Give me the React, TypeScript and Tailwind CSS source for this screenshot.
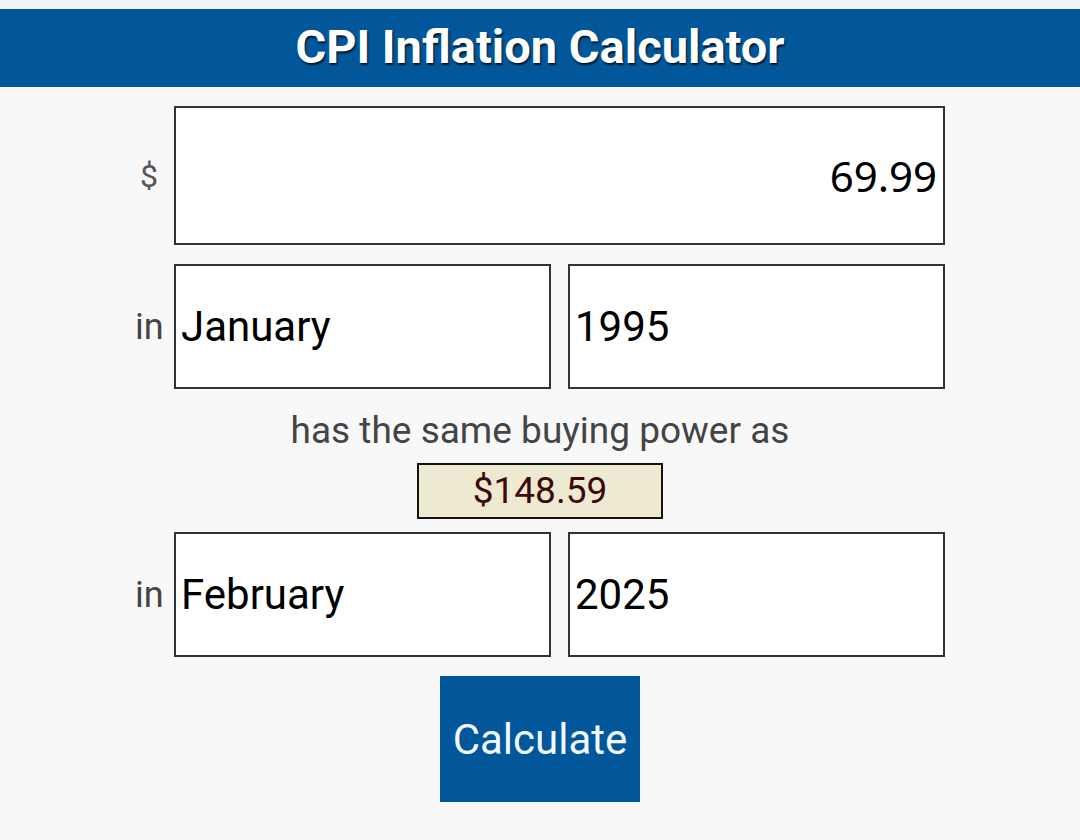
import React, { useState } from 'react';

const Box = ({ value, right, className = '' }: { value: string; right?: boolean; className?: string }) => (
  <div
    className={`flex items-center bg-white border-2 border-[#333] text-black font-['Roboto',sans-serif] text-[42px] ${right ? 'justify-end pr-[6px]' : 'pl-[5px]'} ${className}`}
  >
    {value}
  </div>
);

const Label = ({ text, className }: { text: string; className: string }) => (
  <div className={`w-[39px] shrink-0 text-right text-[#444] font-['Roboto',sans-serif] ${className}`}>{text}</div>
);

export default function App() {
  const [amount] = useState('69.99');

  return (
    <div className="min-h-screen w-full bg-[#f8f8f8] font-['Roboto',sans-serif]">
      <div className="h-[9px] bg-[#eef3fa]" />
      <header className="h-[78px] bg-[#02579b] flex items-center justify-center">
        <h1 className="text-white font-bold text-[47px] leading-none [text-shadow:1px_2px_2px_rgba(0,0,0,0.75)] -mt-[4px]">
          CPI Inflation Calculator
        </h1>
      </header>

      <div className="w-[810px] mx-auto pt-[19px]">
        <div className="flex items-center">
          <Label text="$" className="pr-[16px] text-[32px] text-[#555]" />
          <div className="flex-1 h-[139px] flex items-center justify-end bg-white border-2 border-[#333] pr-[6px] text-black text-[42px] font-['Noto_Sans',sans-serif]">
            {amount}
          </div>
        </div>

        <div className="flex items-center mt-[19px]">
          <Label text="in" className="pr-[12px] text-[36px]" />
          <div className="flex-1 flex gap-[17px]">
            <Box value="January" className="flex-1 h-[125px]" />
            <Box value="1995" className="flex-1 h-[125px]" />
          </div>
        </div>
      </div>

      <p className="mt-[20px] text-center text-[#444] text-[37px] leading-[44px]">has the same buying power as</p>

      <div className="mt-[10px] mx-auto w-[246px] h-[56px] flex items-center justify-center bg-[#eeead2] border-2 border-[#111] text-[#3b0b0b] text-[37px]">
        $148.59
      </div>

      <div className="w-[810px] mx-auto mt-[13px]">
        <div className="flex items-center">
          <Label text="in" className="pr-[12px] text-[36px]" />
          <div className="flex-1 flex gap-[17px]">
            <Box value="February" className="flex-1 h-[125px]" />
            <Box value="2025" className="flex-1 h-[125px]" />
          </div>
        </div>
      </div>

      <div className="flex justify-center mt-[19px]">
        <button className="w-[200px] h-[126px] bg-[#02579b] text-[#f0f8ff] text-[42px]">Calculate</button>
      </div>
    </div>
  );
}
